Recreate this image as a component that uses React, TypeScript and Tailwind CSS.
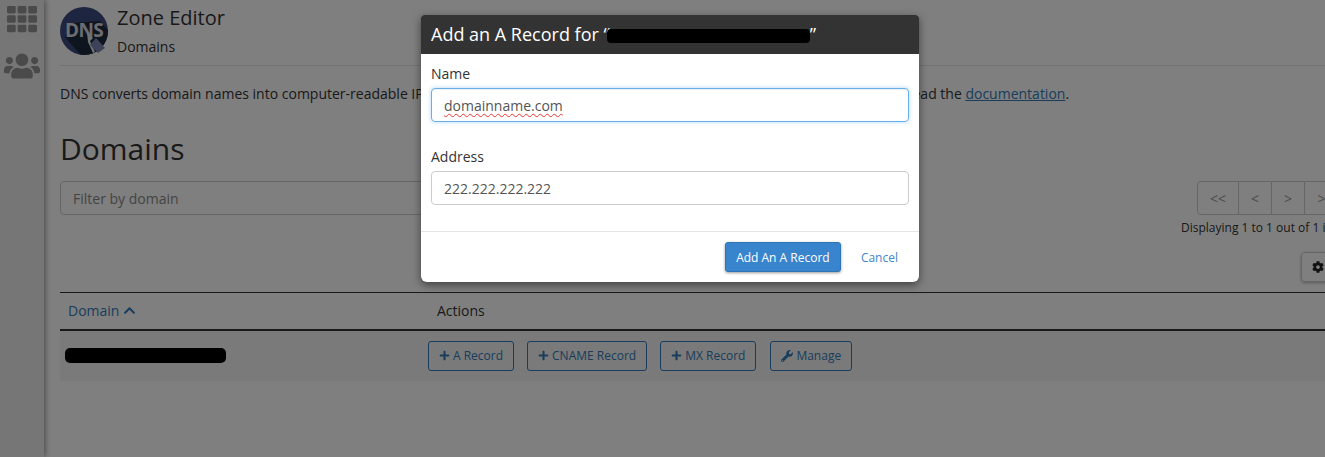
import { FaChevronUp, FaCog, FaPlus, FaTh, FaUsers, FaWrench } from "react-icons/fa";

const recordButtons = ["A Record", "CNAME Record", "MX Record"];

function DnsLogo() {
  return (
    <svg width="48" height="48" viewBox="0 0 48 48" className="mt-px shrink-0">
      <defs>
        <clipPath id="logo-circle">
          <circle cx="24" cy="24" r="24" />
        </clipPath>
      </defs>
      <circle cx="24" cy="24" r="24" fill="#3d4a80" />
      <g clipPath="url(#logo-circle)">
        <path d="M5 30 L12 16 L40 14 L52 28 L52 52 L24 52 Z" fill="#1d2a3d" />
      </g>
      <text x="5" y="30" fontFamily="'Open Sans', sans-serif" fontWeight="700" fontSize="19" letterSpacing="-0.6" fill="#d8dbe6">
        DNS
      </text>
      <path d="M27 25 L33 31 L30 34 L35 45 L33 46 L28 35 Z" fill="#e4e6ee" />
      <path d="M36 31 L45 41 L38 46 L30 38 Z" fill="#7c86b4" />
    </svg>
  );
}

function Page() {
  return (
    <div className="flex h-[457px] w-[1325px] overflow-hidden bg-white font-['Open_Sans',sans-serif] text-[#333]">
      <aside className="flex w-[44px] shrink-0 flex-col items-center bg-[#ececec] pt-[4px] text-[#949494] shadow-[1px_0_6px_rgba(0,0,0,0.45)]">
        <FaTh className="h-[30px] w-[30px]" />
        <FaUsers className="mt-[17px] h-[30px] w-[36px]" />
      </aside>
      <main className="w-[1301px] shrink-0 pl-4">
        <div className="w-[1400px]">
          <header className="flex h-[66px] items-start gap-[9px] border-b border-[#e4e4e4] pt-[6px]">
            <DnsLogo />
            <div>
              <h1 className="text-[20px] leading-[24px]">Zone Editor</h1>
              <p className="mt-[8px] text-[14px] leading-[18px]">Domains</p>
            </div>
          </header>
          <p className="mt-[18px] text-[14px] leading-[20px]">
            DNS converts domain names into computer-readable IP addresses. Use this feature to manage DNS zones. For more information, read the{" "}
            <span className="text-[#337ab7] underline">documentation</span>.
          </p>
          <h2 className="mt-[25px] text-[30px] leading-[40px]">Domains</h2>
          <div className="mt-[12px] flex h-[34px] items-start">
            <div className="flex h-[34px] w-[620px] items-center rounded border border-[#ccc] px-3 text-[14px] text-[#888]">
              Filter by domain
            </div>
            <div className="ml-[517px] flex h-[34px] rounded border border-[#ccc] text-[14px] text-[#999]">
              <span className="flex w-[41px] items-center justify-center border-r border-[#ccc]">&lt;&lt;</span>
              <span className="flex w-[33px] items-center justify-center border-r border-[#ccc]">&lt;</span>
              <span className="flex w-[33px] items-center justify-center border-r border-[#ccc]">&gt;</span>
              <span className="flex w-[41px] items-center justify-center">&gt;&gt;</span>
            </div>
          </div>
          <p className="mt-[4px] pl-[1121px] text-[12px] leading-[17px] whitespace-nowrap">Displaying 1 to 1 out of 1 items</p>
          <div className="mt-[16px] pl-[1241px]">
            <button className="flex h-[30px] w-[44px] items-center rounded border border-[#ccc] pl-[10px] text-[12px] text-[#222] shadow-[0_1px_3px_rgba(0,0,0,0.3)]">
              <FaCog />
            </button>
          </div>
          <div className="mt-[10px] flex h-[39px] items-center border-t border-b-2 border-t-[#333] border-b-[#333] pb-[2px] text-[14px]">
            <span className="flex w-[377px] items-center gap-1 pl-2 text-[#337ab7]">
              Domain <FaChevronUp className="h-[13px] w-[13px]" />
            </span>
            <span>Actions</span>
          </div>
          <div className="flex h-[50px] items-center bg-[#f5f5f5] pb-[1px]">
            <div className="w-[368px] pl-[5px]">
              <div className="h-[15px] w-[161px] rounded-[5px] bg-black" />
            </div>
            <div className="flex gap-[13px]">
              {recordButtons.map((label) => (
                <button
                  key={label}
                  className="flex h-[30px] items-center gap-[3px] rounded-[3px] border border-[#337ab7] px-[10px] text-[12px] text-[#337ab7]"
                >
                  <FaPlus className="h-[11px] w-[11px]" />
                  {label}
                </button>
              ))}
              <button className="ml-px flex h-[30px] items-center gap-[3px] rounded-[3px] border border-[#337ab7] px-[10px] text-[12px] text-[#337ab7]">
                <FaWrench className="h-[12px] w-[12px]" />
                Manage
              </button>
            </div>
          </div>
        </div>
      </main>
    </div>
  );
}

function Modal() {
  return (
    <div className="absolute top-[15px] left-[421px] w-[498px] overflow-hidden rounded-t-[3px] rounded-b-md bg-white font-['Open_Sans',sans-serif] shadow-[0_3px_9px_rgba(0,0,0,0.5)]">
      <div className="flex h-[39px] items-center bg-[#333] px-[10px] text-[18px] whitespace-nowrap text-white">
        Add an A Record for “<span className="mt-[2px] -ml-[3px] h-[14px] w-[203px] shrink-0 rounded-sm bg-black" />”
      </div>
      <div className="border-b border-[#e5e5e5] px-[10px] pt-[10px] pb-[26px] text-[14px] text-[#333]">
        <label className="block leading-[20px]">Name</label>
        <div className="mt-[4px] flex h-[34px] items-center rounded border border-[#66afe9] px-3 text-[#555] shadow-[inset_0_1px_1px_rgba(0,0,0,0.075),0_0_4px_rgba(102,175,233,0.5)]">
          <span className="underline decoration-[#e33] decoration-wavy decoration-1 underline-offset-2">domainname.com</span>
        </div>
        <label className="mt-[25px] block leading-[20px]">Address</label>
        <div className="mt-[4px] flex h-[34px] items-center rounded border border-[#ccc] px-3 text-[#555]">222.222.222.222</div>
      </div>
      <div className="flex h-[50px] items-center justify-end gap-[20px] pr-[21px] text-[12px]">
        <button className="h-[30px] w-[116px] rounded-[3px] border border-[#2f74b5] bg-[#3884cd] pt-px text-white shadow-[0_1px_3px_rgba(0,0,0,0.4)]">
          Add An A Record
        </button>
        <span className="mt-px text-[#3f85c9]">Cancel</span>
      </div>
    </div>
  );
}

export default function App() {
  return (
    <div className="relative h-[457px] w-[1325px] overflow-hidden">
      <Page />
      {/* Modal backdrop */}
      <div className="absolute inset-0 bg-black/50" />
      <Modal />
    </div>
  );
}
